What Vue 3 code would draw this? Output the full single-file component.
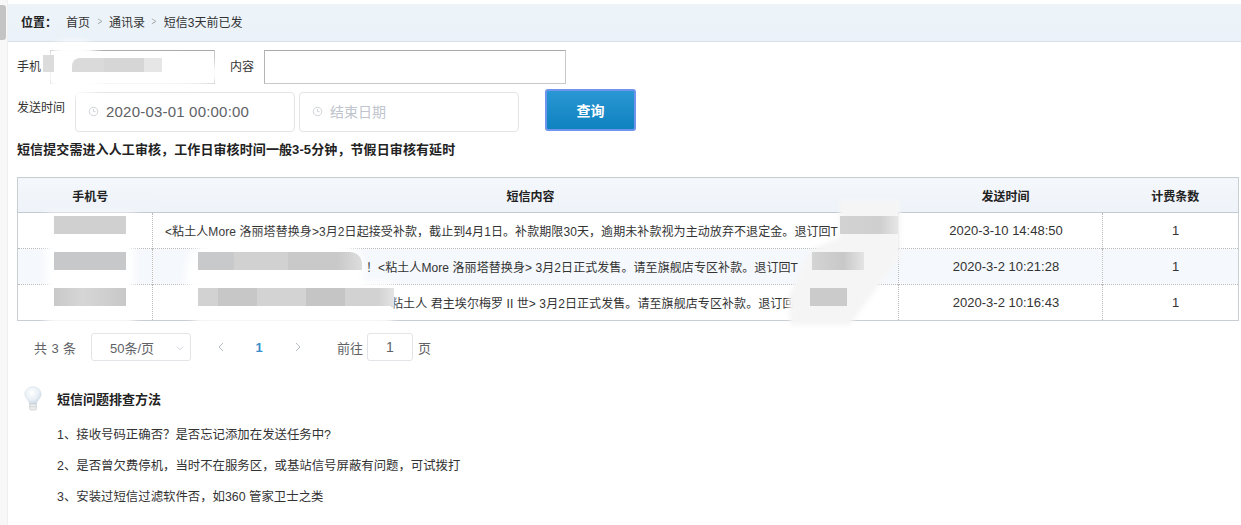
<script setup>
const rows = [
  { text: '<粘土人More 洛丽塔替换身>3月2日起接受补款，截止到4月1日。补款期限30天，逾期未补款视为主动放弃不退定金。退订回T', time: '2020-3-10 14:48:50', n: 1, pad: 'p1' },
  { text: '！<粘土人More 洛丽塔替换身> 3月2日正式发售。请至旗舰店专区补款。退订回T', time: '2020-3-2 10:21:28', n: 1, pad: 'p2' },
  { text: '粘土人 君主埃尔梅罗 II 世> 3月2日正式发售。请至旗舰店专区补款。退订回', time: '2020-3-2 10:16:43', n: 1, pad: 'p3' },
]
const tips = [
  '1、接收号码正确否？是否忘记添加在发送任务中?',
  '2、是否曾欠费停机，当时不在服务区，或基站信号屏蔽有问题，可试拨打',
  '3、安装过短信过滤软件否，如360 管家卫士之类',
]
</script>

<template>
  <div class="page">
    <aside class="rail"><div class="thumb"></div></aside>
    <main class="main">
      <nav class="crumb">
        <b class="loc">位置：</b>
        <span>首页</span><i class="sep">&gt;</i><span>通讯录</span><i class="sep">&gt;</i><span>短信3天前已发</span>
      </nav>

      <section class="form">
        <div class="line one">
          <label class="lab">手机</label>
          <div class="inp phone"></div>
          <label class="lab l2">内容</label>
          <div class="inp content"></div>
        </div>
        <div class="line two">
          <label class="lab l3">发送时间</label>
          <div class="date">
            <svg class="clock" viewBox="0 0 12 12"><circle cx="6" cy="6" r="4.6"/><path d="M6 3.2V6.2H8.2"/></svg>
            <span class="val">2020-03-01 00:00:00</span>
          </div>
          <div class="date end">
            <svg class="clock" viewBox="0 0 12 12"><circle cx="6" cy="6" r="4.6"/><path d="M6 3.2V6.2H8.2"/></svg>
            <span>结束日期</span>
          </div>
          <button class="query">查询</button>
        </div>
        <p class="note">短信提交需进入人工审核，工作日审核时间一般3-5分钟，节假日审核有延时</p>
      </section>

      <table class="grid">
        <colgroup><col class="c1"><col class="c2"><col class="c3"><col class="c4"></colgroup>
        <thead><tr><th>手机号</th><th>短信内容</th><th>发送时间</th><th>计费条数</th></tr></thead>
        <tbody>
          <tr v-for="(r, i) in rows" :key="i" :class="{ alt: i === 1 }">
            <td></td>
            <td class="msg" :class="r.pad">{{ r.text }}</td>
            <td class="time">{{ r.time }}</td>
            <td class="num">{{ r.n }}</td>
          </tr>
        </tbody>
      </table>

      <div class="pager">
        <span class="total">共 3 条</span>
        <div class="size"><span>50条/页</span>
          <svg viewBox="0 0 12 12"><path d="M2 4.2L6 8L10 4.2"/></svg>
        </div>
        <svg class="arrow prev" viewBox="0 0 10 12"><path d="M7 2L3 6L7 10"/></svg>
        <b class="cur">1</b>
        <svg class="arrow next" viewBox="0 0 10 12"><path d="M3 2L7 6L3 10"/></svg>
        <span class="goto">前往</span>
        <div class="jump">1</div>
        <span class="pg">页</span>
      </div>

      <section class="help">
        <div class="help-head">
          <svg class="bulb" width="20" height="27" viewBox="0 0 22 28">
            <defs>
              <radialGradient id="glass" cx="0.42" cy="0.35" r="0.7">
                <stop offset="0" stop-color="#ffffff"/><stop offset="0.6" stop-color="#e8eff5"/><stop offset="1" stop-color="#c4d3de"/>
              </radialGradient>
            </defs>
            <path d="M11 1C5.8 1 2 4.8 2 9.4C2 13.4 6.4 15.8 7.2 20H14.8C15.6 15.8 20 13.4 20 9.4C20 4.8 16.2 1 11 1Z" fill="url(#glass)" stroke="#d6e0e8" stroke-width=".6"/>
            <path d="M7.4 20H14.6V25.4C14.6 26.2 14 26.6 13.2 26.6H8.8C8 26.6 7.4 26.2 7.4 25.4Z" fill="#eeeeee" stroke="#c4c9cc" stroke-width=".8"/>
            <path d="M7.6 23H14.4" stroke="#c4c9cc" stroke-width=".7"/>
          </svg>
          <b>短信问题排查方法</b>
        </div>
        <p v-for="t in tips" :key="t" class="tip">{{ t }}</p>
      </section>
    </main>

    <!-- redaction smears lying over the content -->
    <div class="smear s-phone"></div>
    <div class="smear s-phone2"></div>
    <div class="bar bp"></div>
    <div class="bar bp2"></div>
    <div class="smear s-col1"></div>
    <div class="bar k1"></div><div class="bar k2"></div><div class="bar k3"></div>
    <div class="smear s-msg1"></div>
    <div class="smear s-msg2"></div>
    <div class="bar m1"></div><div class="bar m2"></div>
    <div class="s-right"><i></i></div>
    <div class="bar r1"></div><div class="bar r2"></div><div class="bar r3"></div>
  </div>
</template>

<style>
html, body { background: #fff; overflow: hidden; }
</style>

<style scoped>
.page {
  position: relative;
  display: flex;
  width: 1241px;
  height: 525px;
  overflow: hidden;
  font-family: "Liberation Sans", "Noto Sans CJK SC", sans-serif;
  font-size: 12px;
  color: #333;
  background: #fff;
}
.rail { flex: 0 0 8px; background: #f8f8f8; border-right: 1px solid #f0f0f0; box-sizing: border-box; padding-top: 5px; }
.thumb { width: 6px; height: 35px; background: #c4c4c4; border-radius: 0 3px 3px 0; }
.main { flex: 1; min-width: 0; padding-top: 4px; }

.crumb {
  height: 38px;
  box-sizing: border-box;
  display: flex;
  align-items: center;
  padding: 0 0 3px 13px;
  background: linear-gradient(180deg, #edf3f9, #eaf2f9);
  border-bottom: 1px solid #d9e0e8;
  color: #333;
}
.loc { color: #222; margin-right: 9px; }
.sep { font-style: normal; font-family: "Liberation Sans", sans-serif; font-size: 10px; color: #a8a8a8; margin: 0 6.5px; transform: scaleX(.8); }

.form { padding: 8px 0 0 9px; }
.line { display: flex; align-items: flex-start; }
.one { height: 34px; }
.lab { line-height: 34px; color: #333; }
.inp { box-sizing: border-box; height: 34px; background: #fff; border: 1px solid #c9c9c9; border-top-color: #a9a9a9; border-left-color: #b5b5b5; }
.phone { width: 165px; margin-left: 9px; }
.l2 { margin-left: 15px; }
.content { width: 302px; margin-left: 10px; }
.two { margin-top: 5px; height: 44px; }
.l3 { margin-top: 6px; line-height: 26px; }
.date {
  box-sizing: border-box;
  width: 220px;
  height: 40px;
  margin-top: 3px;
  margin-left: 10px;
  display: flex;
  align-items: center;
  padding: 0 0 2px 12px;
  border: 1px solid #e2e4e8;
  border-radius: 4px;
  font-size: 14px;
  color: #606266;
}
.date.end { margin-left: 4px; color: #c0c4cc; }
.val { font-size: 15px; letter-spacing: .2px; }
.clock { width: 11px; height: 11px; margin-right: 7px; fill: none; stroke: #c6cad1; stroke-width: .9; }
.query {
  box-sizing: border-box;
  width: 91px;
  height: 42px;
  margin-left: 26px;
  padding: 0;
  border: 2px solid #6f94ee;
  border-radius: 3px;
  background: linear-gradient(180deg, #2a97d4, #0f82c0);
  color: #fff;
  font: bold 14px "Liberation Sans", "Noto Sans CJK SC", sans-serif;
}
.note { margin: 8px 0 0; font-weight: bold; font-size: 13px; letter-spacing: .1px; line-height: 17px; color: #222; }

.grid {
  margin: 19px 0 0 9px;
  width: 1222px;
  table-layout: fixed;
  border-collapse: collapse;
  border: 1px solid #c9ced3;
  color: #333;
}
.c1 { width: 135px; } .c2 { width: 746px; } .c3 { width: 204px; } .c4 { width: 136px; }
th {
  height: 34px;
  padding: 0 0 0 10px;
  font-size: 12px;
  font-weight: bold;
  color: #222;
  background: linear-gradient(180deg, #f4f7fb, #eef3f9);
  border-bottom: 1px solid #c3cad2;
}
td {
  height: 35px;
  padding: 0;
  text-align: center;
  border-left: 1px dotted #b9b9b9;
  border-top: 1px dotted #b9b9b9;
  white-space: nowrap;
  overflow: hidden;
}
tbody tr:first-child td { border-top: 0; }
td:first-child { border-left: 0; }
.alt td { background: #f5f8fc; }
.msg { text-align: left; letter-spacing: .08px; }
.time { font-size: 13px; padding-left: 11px; }
.num { font-size: 13px; padding-left: 10px; }
.p1 { padding-left: 12px; }
.p2 { padding-left: 213px; }
.p3 { padding-left: 238px; }

.pager { display: flex; align-items: center; height: 28px; margin: 12px 0 0 26px; font-size: 13px; color: #606266; }
.total { width: 57px; letter-spacing: .4px; }
.size {
  box-sizing: border-box;
  width: 100px;
  height: 28px;
  display: flex;
  align-items: center;
  border: 1px solid #e2e4e8;
  border-radius: 3px;
  padding-left: 18px;
  position: relative;
  letter-spacing: 0;
}
.size svg { position: absolute; right: 5px; top: 9px; width: 10px; height: 10px; fill: none; stroke: #c6cad1; }
.arrow { width: 10px; height: 12px; fill: none; stroke: #b8bcc4; }
.prev { margin-left: 25px; }
.cur { width: 10px; margin-left: 28px; color: #3a8ecb; text-align: center; }
.next { margin-left: 29px; }
.goto { margin-left: 34px; }
.jump {
  box-sizing: border-box;
  width: 46px;
  height: 28px;
  line-height: 26px;
  margin-left: 4px;
  text-align: center;
  border: 1px solid #e2e4e8;
  border-radius: 3px;
  font-size: 14px;
}
.pg { margin-left: 5px; }

.help { padding: 23px 0 0 15px; }
.help-head { display: flex; align-items: center; height: 28px; font-size: 13px; color: #222; }
.bulb { margin-right: 14px; }
.tip { margin: 0; height: 31px; line-height: 31px; padding-left: 34px; font-size: 12.4px; color: #333; }
.help-head + .tip { margin-top: 8px; }

.smear { position: absolute; background: #fff; filter: blur(4px); }
.bar { position: absolute; height: 18px; }
.s-phone { left: 46px; top: 42px; width: 54px; height: 54px; border-radius: 40%; }
.s-phone2 { left: 56px; top: 58px; width: 166px; height: 30px; border-radius: 40%; }
.bp { left: 43px; top: 55px; width: 11px; height: 17px; background: #dcdcdc; }
.bp2 { left: 72px; top: 58px; width: 90px; height: 14px; background: linear-gradient(90deg, #dadada 0 36%, #d6d6d6 36% 80%, #e6e6e6 80%); border-radius: 8px 0 0 0; }
.s-col1 { left: 46px; top: 214px; width: 88px; height: 110px; }
.k1, .k2, .k3 { left: 54px; width: 72px; }
.k1 { top: 216px; background: #d0d0d0; }
.k2 { top: 252px; background: #c6c8ca; }
.k3 { top: 288px; background: linear-gradient(90deg,#c9c9c9,#d6d6d6 40%,#c8c8c8); }
.s-msg1 { left: 186px; top: 240px; width: 178px; height: 50px; border-radius: 30px 30px 0 0; }
.s-msg2 { left: 194px; top: 282px; width: 198px; height: 42px; }
.m1, .m2 { left: 198px; }
.m1 { top: 252px; width: 164px; background: linear-gradient(90deg,#c8c9ca 0 22%,#d1d1d1 22% 55%,#c9c9ca 55% 85%,#ddd); border-radius: 0 12px 0 0; }
.m2 { top: 288px; width: 196px; background: linear-gradient(90deg,#d2d2d2 0 10%,#c7c7c7 10% 30%,#d3d3d3 30% 55%,#c5c5c5 55% 75%,#d2d2d2 75% 92%,#e4e4e4); }
.s-right { position: absolute; left: 788px; top: 200px; width: 112px; height: 125px; filter: blur(2px); }
.s-right i { display: block; width: 100%; height: 100%; background: #f5f5f5; clip-path: polygon(46% 0, 100% 0, 100% 46%, 55% 100%, 2% 100%, 0 78%, 20% 40%, 46% 30%); }
.r1 { top: 216px; left: 840px; width: 58px; background: linear-gradient(90deg,#d2d2d2,#cfcfcf 70%,#e6e6e6); }
.r2 { top: 252px; left: 812px; width: 52px; background: linear-gradient(90deg,#d4d4d4,#c8c8c8 60%,#e4e4e4); }
.r3 { top: 288px; left: 810px; width: 37px; background: #cbcbcb; }
</style>
